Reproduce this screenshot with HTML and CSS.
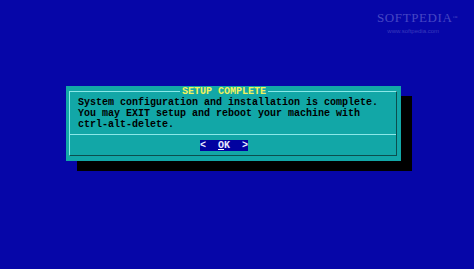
FILE: index.html
```html
<!DOCTYPE html>
<html>
<head>
<meta charset="utf-8">
<link rel="stylesheet" href="styles.css">
</head>
<body>
<div class="screen">
  <div class="watermark">
    <div class="wm-logo">SOFTPEDIA<span class="tm">™</span></div>
    <div class="wm-url">www.softpedia.com</div>
  </div>
  <div class="dialog">
    <div class="frame">
      <div class="title">SETUP COMPLETE</div>
      <div class="message">
        <div class="line">System configuration and installation is complete.</div>
        <div class="line">You may EXIT setup and reboot your machine with</div>
        <div class="line">ctrl-alt-delete.</div>
      </div>
      <div class="separator"></div>
      <div class="buttons">
        <div class="button">&lt;  <u>O</u>K  &gt;</div>
      </div>
    </div>
  </div>
</div>
</body>
</html>
```
FILE: styles.css
```css
html, body {
  margin: 0;
  padding: 0;
  background: #0606a8;
}
.screen {
  position: relative;
  width: 474px;
  height: 269px;
  overflow: hidden;
  background: #0606a8;
  padding-top: 86px;
  box-sizing: border-box;
}
.watermark {
  position: absolute;
  left: 377px;
  top: 11px;
  color: #4646c4;
  text-align: center;
}
.wm-logo {
  font-family: "Liberation Serif", serif;
  font-size: 13px;
  letter-spacing: 0.6px;
  line-height: 14px;
}
.tm {
  font-size: 5px;
  vertical-align: top;
  letter-spacing: 0;
}
.wm-url {
  font-family: "Liberation Sans", sans-serif;
  font-size: 6px;
  line-height: 8px;
  margin-top: 2px;
  margin-left: -8px;
  color: #3a3abc;
}
.dialog {
  margin-left: 66px;
  width: 335px;
  height: 75px;
  box-sizing: border-box;
  padding: 5px 4px 5px 3px;
  background: #12a7a7;
  box-shadow: 11px 10px 0 #000;
}
.frame {
  position: relative;
  height: 100%;
  box-sizing: border-box;
  border-top: 1px solid #8ae8e8;
  border-left: 1px solid #8ae8e8;
  border-right: 1px solid #0b4f4f;
  border-bottom: 1px solid #0b4f4f;
  padding: 5px 0 0 8px;
  font-family: "Liberation Mono", monospace;
  font-weight: bold;
  font-size: 10px;
  line-height: 11px;
  color: #000;
}
.title {
  position: absolute;
  left: 110px;
  top: -6px;
  padding: 0 2px;
  background: #12a7a7;
  color: #f2f25a;
  white-space: pre;
}
.message {
  height: 33px;
}
.line {
  white-space: pre;
  height: 11px;
}
.separator {
  margin: 4px 0 0 -8px;
  height: 1px;
  background: #8ae8e8;
}
.buttons {
  margin-top: 5px;
  padding-left: 122px;
  display: flex;
}
.button {
  background: #0202a0;
  color: #e8e8ff;
  white-space: pre;
  height: 11px;
  line-height: 11px;
}
.button u {
  text-decoration-color: #ffffff;
}
```
